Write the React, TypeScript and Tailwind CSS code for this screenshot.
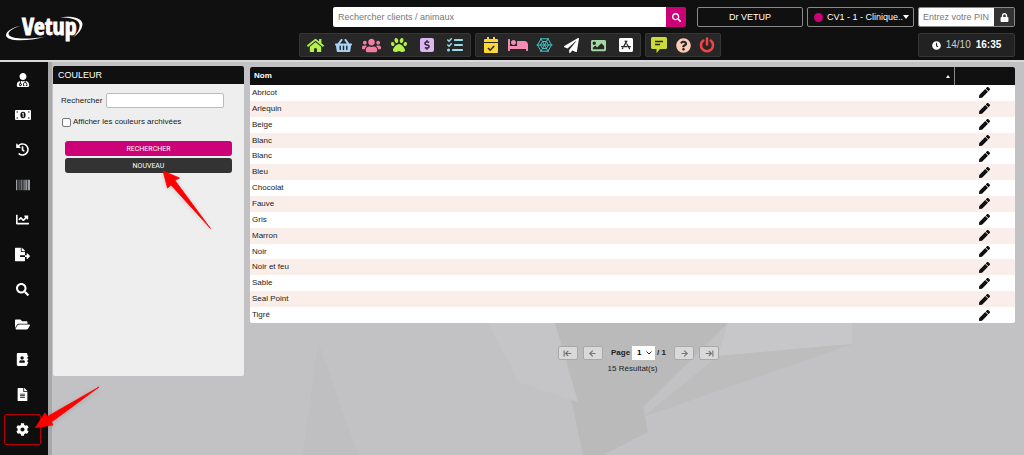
import type { ReactNode } from "react";
import {
  FaAddressBook,
  FaBarcode,
  FaBed,
  FaChartLine,
  FaClock,
  FaCog,
  FaDollarSign,
  FaFileAlt,
  FaFileExport,
  FaFolderOpen,
  FaHistory,
  FaHome,
  FaImage,
  FaLock,
  FaPaperPlane,
  FaPaw,
  FaPen,
  FaQuestionCircle,
  FaSearch,
  FaShoppingBasket,
  FaUserMd,
  FaUsers,
  FaAppStoreIos,
} from "react-icons/fa";
import { FaListCheck } from "react-icons/fa6";
import {
  ArrowLeft,
  ArrowLeftToLine,
  ArrowRight,
  ArrowRightToLine,
} from "lucide-react";

interface IconItem {
  label: string;
  icon: ReactNode;
}

const colors = [
  "Abricot",
  "Arlequin",
  "Beige",
  "Blanc",
  "Blanc",
  "Bleu",
  "Chocolat",
  "Fauve",
  "Gris",
  "Marron",
  "Noir",
  "Noir et feu",
  "Sable",
  "Seal Point",
  "Tigré",
];

const sidebarItems: IconItem[] = [
  { label: "Vétérinaire", icon: <FaUserMd size={14} /> },
  { label: "Caisse", icon: <BanknoteIcon /> },
  { label: "Historique", icon: <FaHistory size={13} /> },
  { label: "Codes-barres", icon: <FaBarcode size={14} className="text-gray-300" /> },
  { label: "Statistiques", icon: <FaChartLine size={13} /> },
  { label: "Export", icon: <FaFileExport size={15} /> },
  { label: "Recherche", icon: <FaSearch size={13} /> },
  { label: "Dossiers", icon: <FaFolderOpen size={15} /> },
  { label: "Contacts", icon: <FaAddressBook size={13} /> },
  { label: "Documents", icon: <FaFileAlt size={13} /> },
  { label: "Paramètres", icon: <FaCog size={13} /> },
];

const mainTools: IconItem[] = [
  { label: "Accueil", icon: <FaHome size={17} className="text-[#b2f04c]" /> },
  { label: "Panier", icon: <FaShoppingBasket size={17} className="text-[#a9d3f5]" /> },
  { label: "Clients", icon: <FaUsers size={19} className="text-[#f27ea3]" /> },
  { label: "Animaux", icon: <FaPaw size={16} className="text-[#b2f04c]" /> },
  {
    label: "Facturation",
    icon: (
      <span className="flex h-[14px] w-[14px] items-center justify-center rounded-xs bg-[#dcb5f2] text-[#2b2b2b]">
        <FaDollarSign size={10} />
      </span>
    ),
  },
  { label: "Tâches", icon: <FaListCheck size={16} className="text-[#96dce8]" /> },
];

const activityTools: IconItem[] = [
  { label: "Agenda", icon: <CalendarIcon /> },
  { label: "Hospitalisation", icon: <FaBed size={20} className="text-[#f48bb0]" /> },
  { label: "Réseau", icon: <WebIcon /> },
  { label: "Envois", icon: <FaPaperPlane size={15} className="text-white" /> },
  { label: "Images", icon: <FaImage size={15} className="text-[#a3d6a0]" /> },
  { label: "Applications", icon: <FaAppStoreIos size={16} className="text-white" /> },
];

const supportTools: IconItem[] = [
  { label: "Messages", icon: <MessageIcon /> },
  { label: "Aide", icon: <FaQuestionCircle size={15} className="text-[#ffcbb5]" /> },
  { label: "Déconnexion", icon: <PowerIcon /> },
];

function BanknoteIcon() {
  return (
    <svg width="16" height="10" viewBox="0 0 16 10">
      <rect width="16" height="10" rx="1" fill="#fff" />
      <ellipse cx="8" cy="5" rx="2.600" ry="3.200" fill="#0e0e0e" />
      <path d="M7.200 3.600l1-.6v4" fill="none" stroke="#fff" strokeWidth="1" />
      <path
        d="M1.500 1.500h1.500v1H1.500zM13 1.500h1.500v1H13zM1.500 7.500h1.500v1H1.500zM13 7.500h1.500v1H13z"
        fill="#0e0e0e"
      />
    </svg>
  );
}

function CalendarIcon() {
  return (
    <svg width="14" height="16" viewBox="0 0 14 16" fill="#fdd835">
      <path d="M3 0h2v2h4V0h2v2h2a1 1 0 0 1 1 1v2H0V3a1 1 0 0 1 1-1h2z" />
      <path d="M0 6h14v9a1 1 0 0 1-1 1H1a1 1 0 0 1-1-1z" />
      <path d="M4 11l2.200 2.200L10.200 9" fill="none" stroke="#2b2b2b" strokeWidth="1.600" />
    </svg>
  );
}

function WebIcon() {
  return (
    <svg width="17" height="16" viewBox="-8.500 -8 17 16" fill="none" stroke="#45c5c5" strokeWidth="1">
      <path d="M-8 0H8M-4 -7L4 7M4 -7L-4 7" />
      <path d="M-7 0L-3.500 -6.200H3.500L7 0L3.500 6.200H-3.500z" />
      <path d="M-4 0L-2 -3.500H2L4 0L2 3.500H-2z" />
    </svg>
  );
}

function MessageIcon() {
  return (
    <svg width="16" height="16" viewBox="0 0 16 16" fill="#cddc39">
      <path d="M1.500 0h13A1.500 1.500 0 0 1 16 1.500v9a1.500 1.500 0 0 1-1.500 1.500H9l-3.500 4v-4h-4A1.500 1.500 0 0 1 0 10.500v-9A1.500 1.500 0 0 1 1.500 0z" />
      <path d="M4 4.500h8M4 7.500h5" stroke="#2b2b2b" strokeWidth="1.400" />
    </svg>
  );
}

function PowerIcon() {
  return (
    <svg
      width="16"
      height="16"
      viewBox="0 0 16 16"
      fill="none"
      stroke="#ee4444"
      strokeWidth="2.600"
      strokeLinecap="round"
    >
      <path d="M4.200 3.600A6 6 0 1 0 11.800 3.600" />
      <path d="M8 1.500v6" />
    </svg>
  );
}

function Logo() {
  return (
    <a href="#" aria-label="Vetup" className="mt-2 ml-1 block self-start">
      <svg width="80" height="36" viewBox="0 0 80 36">
        <path
          d="M18 17.500C9 19 2 23 2 27.500C3 33.500 22 34 42 28.500C24 32 5 31 4.500 26C4.500 23 10 19.500 18 17.500z"
          fill="#fff"
        />
        <path
          d="M56 9.500C67 7.500 78 10 78.500 16C78 22 74 26.500 69 29C73 25.500 76 21 75.500 16.500C74 11 66 9.500 56 9.500z"
          fill="#fff"
        />
        <text
          x="18"
          y="27"
          fill="#fff"
          stroke="#fff"
          strokeWidth="0.800"
          className="font-['Liberation_Sans_Narrow','Open_Sans_Condensed','DejaVu_Sans_Condensed',sans-serif] text-[24px] font-bold"
        >
          Vetup
        </text>
      </svg>
    </a>
  );
}

function ToolGroup({ items, itemClass }: { items: IconItem[]; itemClass: string }) {
  return (
    <div className="flex h-6 rounded-xs border border-[#363636] bg-[#272727] px-px">
      {items.map((item) => (
        <button
          key={item.label}
          type="button"
          aria-label={item.label}
          className={`flex items-center justify-center ${itemClass}`}
        >
          {item.icon}
        </button>
      ))}
    </div>
  );
}

function Header() {
  return (
    <header className="flex justify-between border-b-2 border-[#d8d8d8] bg-[#101010] pr-[9px]">
      <Logo />
      <div className="flex flex-col items-end gap-[6px] pt-[7px] pb-[3px]">
        <div className="flex h-5 text-[9px]">
          <form className="mr-[11px] flex w-[353px]">
            <input
              type="search"
              aria-label="Rechercher clients / animaux"
              placeholder="Rechercher clients / animaux"
              className="min-w-0 flex-1 rounded-l-xs bg-white px-[5px] text-black placeholder:text-[#777]"
            />
            <button
              type="button"
              aria-label="Lancer la recherche"
              className="flex w-5 items-center justify-center rounded-r-xs bg-[#cc0077] text-white"
            >
              <FaSearch size={9} />
            </button>
          </form>
          <button
            type="button"
            className="mr-1 w-[106px] rounded-xs border border-[#8a8a8a] text-white"
          >
            Dr VETUP
          </button>
          <button
            type="button"
            className="mr-1 flex w-[107px] items-center rounded-xs border border-[#8a8a8a] pl-[6px] text-white"
          >
            <span className="mr-1 h-[9px] w-[9px] rounded-full bg-[#cc0077]" />
            <span>CV1 - 1 - Clinique..</span>
            <svg width="6" height="4" viewBox="0 0 6 4" fill="#fff">
              <path d="M0 0h6L3 4z" />
            </svg>
          </button>
          <div className="flex w-[97px] overflow-hidden rounded-xs border border-[#8a8a8a]">
            <input
              type="password"
              aria-label="Code PIN"
              placeholder="Entrez votre PIN"
              className="min-w-0 flex-1 bg-white pl-1 text-black placeholder:text-[#777]"
            />
            <button
              type="button"
              aria-label="Verrouiller"
              className="flex w-5 items-center justify-center bg-[#333] text-white"
            >
              <FaLock size={9} />
            </button>
          </div>
        </div>
        <div className="flex gap-1">
          <ToolGroup items={mainTools} itemClass="w-[28px]" />
          <ToolGroup items={activityTools} itemClass="w-[27px]" />
          <ToolGroup items={supportTools} itemClass="w-[24px]" />
          <div className="ml-[193px] flex h-6 w-[97px] items-center justify-center gap-[5px] rounded-xs border border-[#363636] bg-[#222] text-[10px] text-white">
            <FaClock size={9} />
            <span className="text-[#ccc]">14/10</span>
            <span className="font-bold">16:35</span>
          </div>
        </div>
      </div>
    </header>
  );
}

function Sidebar() {
  return (
    <nav className="w-12 shrink-0 bg-[#0e0e0e] pl-1">
      {sidebarItems.map((item) => (
        <div key={item.label} className="flex h-[35px] items-center">
          <a
            href="#"
            aria-label={item.label}
            className={`flex h-[31px] w-[37px] items-center justify-center rounded-xs border text-white ${
              item.label === "Paramètres" ? "border-[#b80000]" : "border-transparent"
            }`}
          >
            {item.icon}
          </a>
        </div>
      ))}
    </nav>
  );
}

function FilterPanel() {
  return (
    <section className="min-h-[310px] w-[191px] shrink-0 self-start overflow-hidden rounded-xs bg-[#eee]">
      <h1 className="h-[18px] bg-[#101010] pl-[5px] text-[9px] leading-[18px] text-white">
        COULEUR
      </h1>
      <form className="px-2 pt-[9px]">
        <div className="flex items-center">
          <label htmlFor="search" className="w-[45px]">
            Rechercher
          </label>
          <input
            id="search"
            type="text"
            className="h-[15px] w-[118px] rounded-xs border border-[#bbb] bg-white px-1"
          />
        </div>
        <div className="mt-2 flex items-center gap-[2px] pl-px">
          <input
            id="archived"
            type="checkbox"
            className="h-[9px] w-[9px] appearance-none rounded-xs border border-[#777] bg-white"
          />
          <label htmlFor="archived">Afficher les couleurs archivées</label>
        </div>
        <div className="mt-[13px] flex flex-col gap-[2px] px-1 font-['Roboto',sans-serif] text-[7px] text-white">
          <button type="button" className="h-[15px] rounded-[3px] bg-[#cc0077]">
            RECHERCHER
          </button>
          <button type="button" className="h-[15px] rounded-[3px] bg-[#333]">
            NOUVEAU
          </button>
        </div>
      </form>
    </section>
  );
}

function ColorTable() {
  return (
    <table className="h-[256px] w-full overflow-hidden rounded-xs bg-white text-left leading-[12px]">
      <thead>
        <tr className="h-[18px] bg-[#101010] text-white">
          <th className="px-1">
            <div className="flex items-center justify-between text-[8px]">
              Nom
              <svg width="4" height="3" viewBox="0 0 4 3" fill="#fff">
                <path d="M0 3h4L2 0z" />
              </svg>
            </div>
          </th>
          <th aria-label="Modifier" className="w-[61px] border-l border-[#888]" />
        </tr>
      </thead>
      <tbody>
        {colors.map((color, index) => (
          <tr key={index} className="even:bg-[#faeeea]">
            <td className="px-[2px]">{color}</td>
            <td>
              <button
                type="button"
                aria-label={`Modifier ${color}`}
                className="mx-auto block text-[#101010]"
              >
                <FaPen size={11} />
              </button>
            </td>
          </tr>
        ))}
      </tbody>
    </table>
  );
}

function PageButton({ label, children }: { label: string; children: ReactNode }) {
  return (
    <button
      type="button"
      aria-label={label}
      className="flex h-[14px] w-5 items-center justify-center rounded-xs border border-[#a8a8a8] bg-[#d9d9d9] text-[#777]"
    >
      {children}
    </button>
  );
}

function Pagination() {
  return (
    <div className="mt-[23px]">
      <div className="flex items-center justify-center gap-[5px] pl-3">
        <PageButton label="Première page">
          <ArrowLeftToLine size={9} strokeWidth={3} />
        </PageButton>
        <PageButton label="Page précédente">
          <ArrowLeft size={9} strokeWidth={3} />
        </PageButton>
        <div className="mx-[3px] flex items-center gap-[2px] font-bold">
          <label htmlFor="page">Page</label>
          <span className="relative">
            <select
              id="page"
              className="block h-[14px] w-[23px] appearance-none bg-white pl-[5px] font-bold text-black"
            >
              <option>1</option>
            </select>
            <svg
              className="pointer-events-none absolute top-[5px] right-[3px]"
              width="6"
              height="4"
              viewBox="0 0 6 4"
              fill="none"
              stroke="#222"
            >
              <path d="M0.500 0.500L3 3L5.500 0.500" />
            </svg>
          </span>
          <span>/ 1</span>
        </div>
        <PageButton label="Page suivante">
          <ArrowRight size={9} strokeWidth={3} />
        </PageButton>
        <PageButton label="Dernière page">
          <ArrowRightToLine size={9} strokeWidth={3} />
        </PageButton>
      </div>
      <p className="mt-[3px] text-center">15 Résultat(s)</p>
    </div>
  );
}

// Faceted grey backdrop behind the content
function Backdrop() {
  return (
    <svg
      className="absolute inset-0 h-full w-full"
      viewBox="0 0 976 393"
      preserveAspectRatio="none"
    >
      <path d="M0 0h976v393H0z" fill="#c2c1c3" />
      <path d="M507 261H680L595 345L600 370L555 393H535z" fill="#bababa" />
      <path d="M440 261H507L530 340L470 320z" fill="#c5c4c6" />
      <path d="M680 261H804V282L670 294z" fill="#c7c6c8" />
      <path d="M804 282L595 355L670 294z" fill="#bdbdbd" />
      <path d="M270 280L310 393H255z" fill="#bfbec0" />
      <path d="M0 0h4v393H0z" fill="#a8a8a8" />
    </svg>
  );
}

function Annotations() {
  return (
    <svg
      className="pointer-events-none absolute top-0 left-0 drop-shadow-sm"
      width="230"
      height="450"
      viewBox="0 0 230 450"
      fill="#ff0000"
      stroke="#ff0000"
      strokeWidth="0.800"
      strokeLinejoin="round"
    >
      <path d="M163 171L179.500 178L175 180.500L210.500 228.500L171 185L167.500 188z" />
      <path d="M35.500 427.500L45 413L47.500 416.500L99 387L51.500 422L53 425z" />
    </svg>
  );
}

export default function App() {
  return (
    <div className="relative flex min-h-screen flex-col bg-[#c2c1c3] font-['Liberation_Sans',Arial,sans-serif] text-[8px] leading-[12px] text-[#222]">
      <Header />
      <div className="flex flex-1">
        <Sidebar />
        <main className="relative flex-1">
          <Backdrop />
          <div className="relative flex gap-[6px] pt-1 pr-[9px] pl-[5px]">
            <FilterPanel />
            <div className="min-w-0 flex-1 pt-px">
              <ColorTable />
              <Pagination />
            </div>
          </div>
        </main>
      </div>
      <Annotations />
    </div>
  );
}
